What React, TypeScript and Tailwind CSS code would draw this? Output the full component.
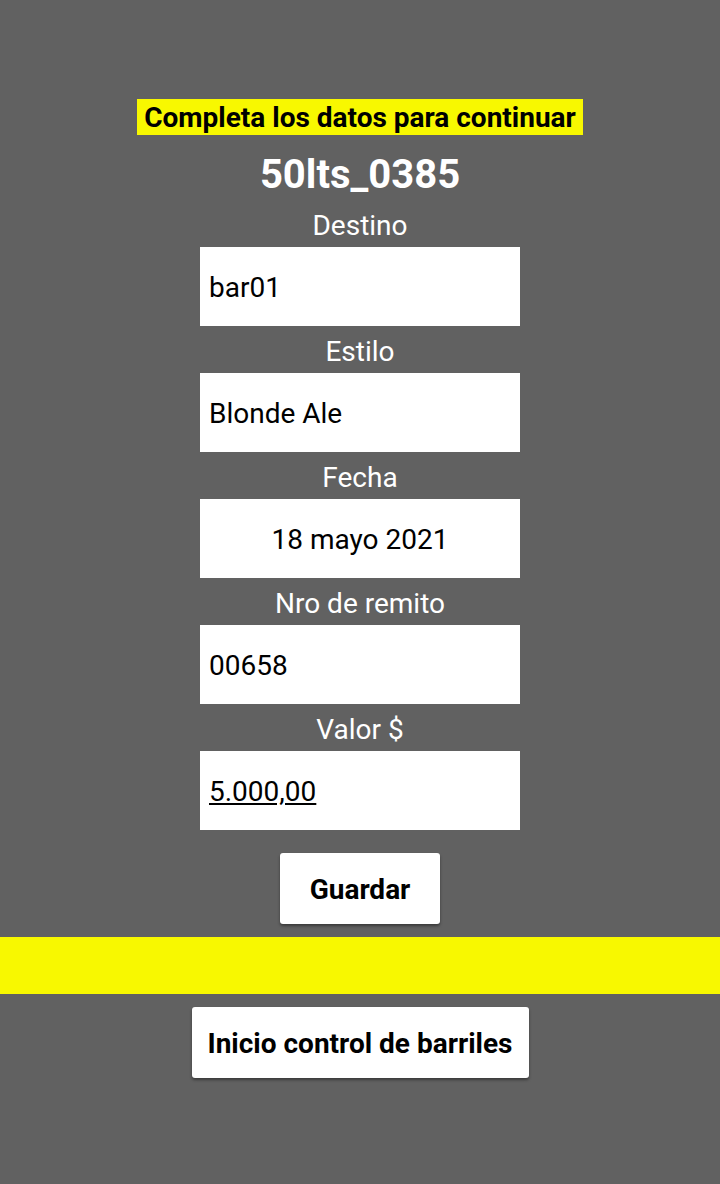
const fields = [
  { label: "Destino", value: "bar01", align: "left" },
  { label: "Estilo", value: "Blonde Ale", align: "left" },
  { label: "Fecha", value: "18 mayo 2021", align: "center" },
  { label: "Nro de remito", value: "00658", align: "left" },
  { label: "Valor $", value: "5.000,00", align: "left", underline: true },
];

export default function App() {
  return (
    <div
      className="flex min-h-[1184px] w-[720px] flex-col items-center bg-[#616161] pt-[99px]"
      style={{ fontFamily: "Roboto, 'Liberation Sans', sans-serif" }}
    >
      <div className="flex h-[36px] items-center bg-[#f8f800] px-[7px] pt-[1px] text-[28px] font-bold text-black">
        Completa los datos para continuar
      </div>

      <h1 className="mt-[10px] h-[55px] pt-[2px] text-[40px] font-bold leading-[55px] text-white">
        50lts_0385
      </h1>

      {fields.map((field) => (
        <div key={field.label} className="flex flex-col items-center">
          <label className="flex h-[47px] items-center pt-[4px] text-[28px] text-white">
            {field.label}
          </label>
          <div
            className={[
              "flex h-[79px] w-[320px] items-center bg-white px-[9px] pt-[3px] text-[28px] text-black",
              field.align === "center" ? "justify-center" : "",
            ].join(" ")}
          >
            <span className={field.underline ? "underline underline-offset-2" : ""}>
              {field.value}
            </span>
          </div>
        </div>
      ))}

      <button className="mt-[23px] h-[71px] w-[160px] rounded-[3px] bg-white pt-[3px] text-[28px] font-bold text-black shadow-[0_2px_3px_rgba(0,0,0,0.4)]">
        Guardar
      </button>

      <div className="mt-[13px] h-[57px] w-full bg-[#f8f800]" />

      <button className="mt-[13px] h-[71px] w-[337px] rounded-[3px] bg-white pt-[3px] text-[28px] font-bold text-black shadow-[0_2px_3px_rgba(0,0,0,0.4)]">
        Inicio control de barriles
      </button>
    </div>
  );
}
